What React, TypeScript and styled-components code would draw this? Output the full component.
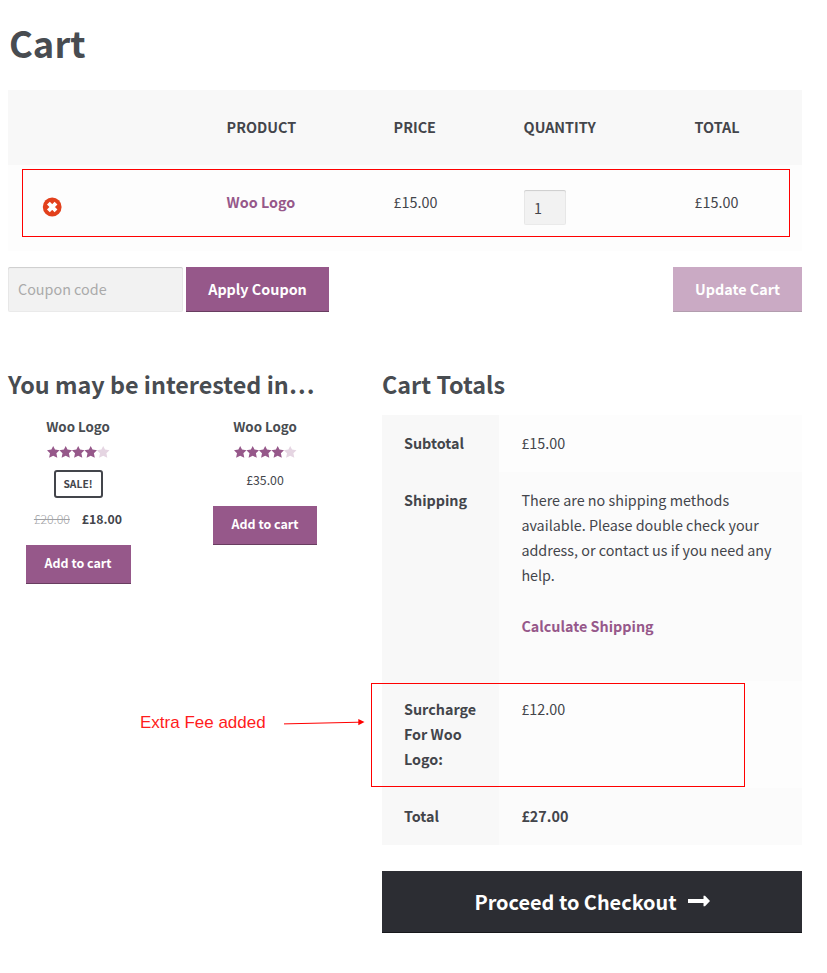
import React from "react";
import styled, { createGlobalStyle, css } from "styled-components";

const GlobalStyle = createGlobalStyle`
  *, *::before, *::after { box-sizing: border-box; }
  body {
    margin: 0;
    background: #fff;
    color: #43454b;
    font-family: "Noto Sans CJK KR", "Noto Sans", sans-serif;
    font-size: 14.35px;
    line-height: 25px;
  }
  button, input { font-family: inherit; margin: 0; }
`;

const Page = styled.main`
  position: relative;
  width: 827px;
  height: 973px;
  padding: 12px 25px 0 8px;
  overflow: hidden;
`;

const PageTitle = styled.h1`
  margin: 0 0 18px;
  height: 60px;
  line-height: 60px;
  padding-left: 1px;
  font-size: 36.4px;
  font-weight: 700;
  color: #484c51;
`;

const cartColumns = css`
  display: grid;
  grid-template-columns: 197px 167px 130px 171px 129px;
`;

const CartHead = styled.div`
  ${cartColumns}
  height: 75px;
  padding-top: 24px;
  background: #f8f8f8;
  font-weight: 700;
  text-transform: uppercase;
`;

const CartRow = styled.div`
  ${cartColumns}
  height: 86px;
  padding-top: 24px;
  background: #fdfdfd;
`;

const Cell = styled.div`
  padding-left: 21.6px;
`;

const RemoveCell = styled.div`
  padding: 8px 0 0 34px;
  svg { display: block; }
`;

const ProductLink = styled.a`
  color: #96588a;
  font-weight: 700;
`;

const inputSkin = css`
  display: block;
  border: 0;
  border-radius: 2px;
  background: #f2f2f2;
  color: #43454b;
  box-shadow: inset 0 1px 1px rgba(0, 0, 0, 0.125), inset 0 0 0 1px rgba(0, 0, 0, 0.03);
  outline: none;
`;

const QuantityInput = styled.input`
  ${inputSkin}
  width: 42px;
  height: 35px;
  margin: 1px 0 0 0.4px;
  padding: 0 0 0 10px;
  font-size: 14.35px;
`;

const CouponInput = styled.input`
  ${inputSkin}
  width: 175px;
  height: 45px;
  padding: 0 10px 2px;
  font-size: 14.35px;
  &::placeholder { color: #aaa; opacity: 1; }
`;

const Actions = styled.div`
  display: flex;
  gap: 3px;
  margin-top: 16px;
`;

const Button = styled.button<{ $width: number; $small?: boolean; $faded?: boolean }>`
  width: ${(p) => p.$width}px;
  height: ${(p) => (p.$small ? 39 : 45)}px;
  padding: 0 0 ${(p) => (p.$small ? 3 : 2)}px;
  border: 0;
  background: #96588a;
  box-shadow: inset 0 -1px 0 rgba(0, 0, 0, 0.3);
  color: #fff;
  font-size: ${(p) => (p.$small ? 12.45 : 14.35)}px;
  font-weight: 700;
  opacity: ${(p) => (p.$faded ? 0.5 : 1)};
  margin-left: ${(p) => (p.$faded ? "auto" : "0")};
`;

const Lower = styled.div`
  display: grid;
  grid-template-columns: 374px 420px;
  margin-top: 54px;
`;

const SectionTitle = styled.h2`
  margin: 0 0 13px;
  height: 36px;
  line-height: 36px;
  font-size: 23.35px;
  font-weight: 700;
  color: #484c51;
  white-space: nowrap;
`;

const Products = styled.div`
  display: grid;
  grid-template-columns: 140px 140px;
  gap: 47px;
  margin-top: -1px;
`;

const Product = styled.article`
  display: flex;
  flex-direction: column;
  align-items: center;
`;

const ProductName = styled.h3`
  margin: 0;
  height: 25px;
  font-size: 13.3px;
  font-weight: 600;
  color: #484c51;
`;

const Stars = styled.svg`
  display: block;
  margin-top: 7px;
`;

const SaleBadge = styled.span`
  width: 49px;
  height: 28px;
  margin: 12px 0 9px;
  border: 2px solid #43454b;
  border-radius: 3px;
  font-size: 10.3px;
  font-weight: 600;
  line-height: 24px;
  text-align: center;
`;

const Price = styled.div<{ $top: number; $bottom: number }>`
  display: flex;
  gap: 12px;
  margin: ${(p) => p.$top}px 0 ${(p) => p.$bottom}px;
  font-size: 12.3px;
  del { color: #a1a2a5; font-weight: 300; }
  ins { font-weight: 700; text-decoration: none; }
`;

const TotalsRow = styled.div<{ $height: number; $alt?: boolean }>`
  display: grid;
  grid-template-columns: 117px 303px;
  height: ${(p) => p.$height}px;
  background: ${(p) => (p.$alt ? "#fbfbfb" : "#fdfdfd")};
`;

const TotalsLabel = styled.div`
  padding: 15px 20px 0 22px;
  background: #f8f8f8;
  font-weight: 700;
`;

const TotalsValue = styled.div<{ $bold?: boolean }>`
  padding: 15px 22px 0 22.4px;
  font-weight: ${(p) => (p.$bold ? 700 : 400)};
`;

const ShippingLink = styled.a`
  display: block;
  margin-top: 26px;
  color: #96588a;
  font-weight: 700;
`;

const Checkout = styled.button`
  display: flex;
  align-items: center;
  justify-content: center;
  gap: 11px;
  width: 420px;
  height: 62px;
  margin-top: 26px;
  padding: 0 0 2px;
  border: 0;
  background: #2c2d33;
  box-shadow: inset 0 -1px 0 #17181c;
  color: #fff;
  font-size: 19.9px;
  font-weight: 700;
`;

const Highlight = styled.div<{ $x: number; $y: number; $w: number; $h: number }>`
  position: absolute;
  left: ${(p) => p.$x}px;
  top: ${(p) => p.$y}px;
  width: ${(p) => p.$w}px;
  height: ${(p) => p.$h}px;
  border: 1px solid #f00;
  pointer-events: none;
`;

const Note = styled.div`
  position: absolute;
  left: 140px;
  top: 710px;
  display: flex;
  align-items: center;
  color: #ff1c1c;
  font-family: "Liberation Sans", sans-serif;
  font-size: 17px;
  white-space: nowrap;
  svg { position: absolute; left: 143px; top: 5px; }
`;

const STAR = "M6.2 0 L8 3.6 L12.5 4.2 L9.4 7.2 L10.3 11.8 L6.2 9.7 L2.1 11.8 L3 7.2 L-0.1 4.2 L4.4 3.6 Z";

function Rating({ value }: { value: number }) {
  return (
    <Stars width="63" height="12" viewBox="0 0 63 12">
      {[0, 1, 2, 3, 4].map((i) => (
        <path key={i} d={STAR} transform={`translate(${i * 12.5} 0)`} fill={i < value ? "#96588a" : "#e5d5e2"} />
      ))}
    </Stars>
  );
}

export default function App() {
  return (
    <>
      <GlobalStyle />
      <Page>
        <PageTitle>Cart</PageTitle>
        <CartHead>
          <Cell />
          <Cell>Product</Cell>
          <Cell>Price</Cell>
          <Cell>Quantity</Cell>
          <Cell>Total</Cell>
        </CartHead>
        <CartRow>
          <RemoveCell>
            <svg width="20" height="20" viewBox="0 0 20 20">
              <circle cx="10.2" cy="10" r="9.4" fill="#e2401c" />
              <path d="M6.4 6.2 L14 13.8 M14 6.2 L6.4 13.8" stroke="#fff" strokeWidth="4" />
            </svg>
          </RemoveCell>
          <Cell><ProductLink>Woo Logo</ProductLink></Cell>
          <Cell>£15.00</Cell>
          <Cell><QuantityInput defaultValue="1" /></Cell>
          <Cell>£15.00</Cell>
        </CartRow>
        <Actions>
          <CouponInput placeholder="Coupon code" />
          <Button $width={143}>Apply Coupon</Button>
          <Button $width={129} $faded>Update Cart</Button>
        </Actions>
        <Lower>
          <section>
            <SectionTitle>You may be interested in…</SectionTitle>
            <Products>
              <Product>
                <ProductName>Woo Logo</ProductName>
                <Rating value={4} />
                <SaleBadge>SALE!</SaleBadge>
                <Price $top={0} $bottom={13}><del>£20.00</del><ins>£18.00</ins></Price>
                <Button $width={105} $small>Add to cart</Button>
              </Product>
              <Product>
                <ProductName>Woo Logo</ProductName>
                <Rating value={4} />
                <Price $top={10} $bottom={13}>£35.00</Price>
                <Button $width={104} $small>Add to cart</Button>
              </Product>
            </Products>
          </section>
          <section>
            <SectionTitle>Cart Totals</SectionTitle>
            <TotalsRow $height={57}>
              <TotalsLabel>Subtotal</TotalsLabel>
              <TotalsValue>£15.00</TotalsValue>
            </TotalsRow>
            <TotalsRow $height={209} $alt>
              <TotalsLabel>Shipping</TotalsLabel>
              <TotalsValue>
                There are no shipping methods available. Please double check your address, or contact us if you need any help.
                <ShippingLink>Calculate Shipping</ShippingLink>
              </TotalsValue>
            </TotalsRow>
            <TotalsRow $height={107}>
              <TotalsLabel>Surcharge For Woo Logo:</TotalsLabel>
              <TotalsValue>£12.00</TotalsValue>
            </TotalsRow>
            <TotalsRow $height={57} $alt>
              <TotalsLabel>Total</TotalsLabel>
              <TotalsValue $bold>£27.00</TotalsValue>
            </TotalsRow>
            <Checkout>
              Proceed to Checkout
              <svg width="22" height="12" viewBox="0 0 22 12">
                <path d="M0 4 H15.5 V0.8 H17 L22 6 L17 11.2 H15.5 V8 H0 Z" fill="#fff" />
              </svg>
            </Checkout>
          </section>
        </Lower>
        <Highlight $x={22} $y={169} $w={768} $h={68} />
        <Highlight $x={371} $y={683} $w={374} $h={104} />
        <Note>
          Extra Fee added
          <svg width="84" height="14" viewBox="0 0 84 14">
            <path d="M1 8.9 L77 7.2" stroke="#f00" strokeWidth="1" fill="none" />
            <path d="M75.3 4 L81.5 7 L75.3 10.2 Z" fill="#f00" />
          </svg>
        </Note>
      </Page>
    </>
  );
}
